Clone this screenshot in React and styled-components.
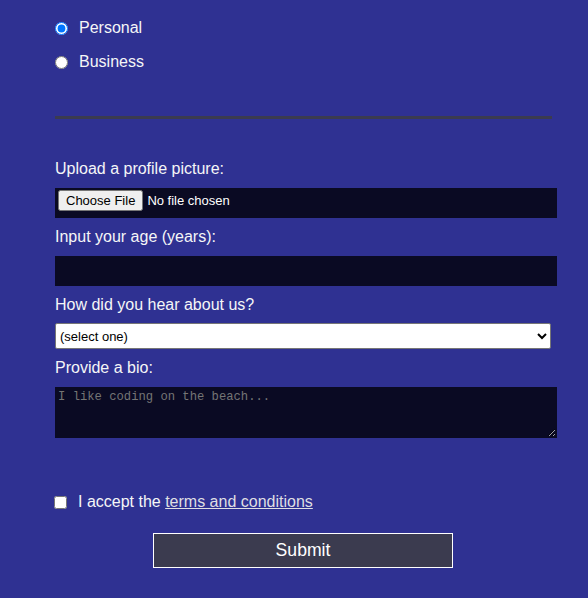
import React from "react";
import styled, { createGlobalStyle } from "styled-components";

const Global = createGlobalStyle`
  html, body { margin: 0; padding: 0; }
  body {
    background: #2f3192;
    color: #f5f6f7;
    font-family: "Liberation Sans", Arial, sans-serif;
    font-size: 16px;
  }
`;

const Form = styled.form`
  width: 502px;
  margin-left: 55px;
  display: flex;
  flex-direction: column;
`;

const RadioGroup = styled.div`
  display: flex;
  flex-direction: column;
  gap: 16px;
  padding-top: 19px;
  width: 497px;
  padding-bottom: 45px;
  border-bottom: 3px solid #3b3b4f;
`;

const RadioRow = styled.label`
  display: flex;
  align-items: center;
  height: 18px;
  gap: 11px;
  line-height: 18px;
`;

const Radio = styled.input`
  margin: 0;
  width: 13px;
  height: 13px;
`;

const Fields = styled.div`
  display: flex;
  flex-direction: column;
  padding-top: 41px;
`;

const Label = styled.label`
  display: block;
  line-height: 18px;
  margin: ${(p) => (p.$first ? "0" : "10px")} 0 ${(p) => (p.$tight ? "9px" : "10px")} 0;
`;

const DarkInput = styled.input`
  box-sizing: border-box;
  width: 502px;
  height: 30px;
  margin: 0;
  background: #0a0a23;
  border: 1px solid #0a0a23;
  color: #ffffff;
  font-family: "Liberation Sans", Arial, sans-serif;
  font-size: 13px;
  padding: 1px 2px;
`;

const Select = styled.select`
  box-sizing: border-box;
  width: 496px;
  height: 26px;
  margin: 0;
  background: #ffffff;
  color: #000;
  border: 1px solid #767676;
  border-radius: 2px;
  font-family: "Liberation Sans", Arial, sans-serif;
  font-size: 13px;
`;

const TextArea = styled.textarea`
  box-sizing: border-box;
  width: 502px;
  height: 51px;
  margin: 0;
  background: #0a0a23;
  border: 1px solid #0a0a23;
  color: #ffffff;
  font-family: "Liberation Mono", "DejaVu Sans Mono", monospace;
  font-size: 12.2px;
  padding: 2px 2px;
  &::placeholder { color: #757575; }
`;

const TermsRow = styled.label`
  display: flex;
  align-items: center;
  gap: 11px;
  margin-top: 54px;
  height: 20px;
  font-size: 16px;
  margin-left: -1px;
`;

const Check = styled.input`
  margin: 0;
  width: 13px;
  height: 13px;
`;

const Link = styled.a`
  color: #dfdfe2;
  text-decoration: underline;
`;

const Submit = styled.button`
  box-sizing: border-box;
  align-self: center;
  margin: 21px 0 0 -6px;
  width: 300px;
  height: 35px;
  background: #3b3b4f;
  border: 1px solid #ffffff;
  color: #ffffff;
  font-family: "Liberation Sans", Arial, sans-serif;
  font-size: 17.6px;
  padding: 0;
`;

export default function App() {
  return (
    <>
      <Global />
      <Form onSubmit={(e) => e.preventDefault()}>
        <RadioGroup>
          <RadioRow>
            <Radio type="radio" name="acct" defaultChecked />
            Personal
          </RadioRow>
          <RadioRow>
            <Radio type="radio" name="acct" />
            Business
          </RadioRow>
        </RadioGroup>
        <Fields>
          <Label $first>Upload a profile picture:</Label>
          <DarkInput type="file" />
          <Label>Input your age (years):</Label>
          <DarkInput type="number" />
          <Label $tight>How did you hear about us?</Label>
          <Select defaultValue="">
            <option value="">(select one)</option>
            <option>freeCodeCamp News</option>
            <option>freeCodeCamp YouTube Channel</option>
            <option>freeCodeCamp Forum</option>
            <option>Other</option>
          </Select>
          <Label>Provide a bio:</Label>
          <TextArea placeholder="I like coding on the beach..." />
        </Fields>
        <TermsRow>
          <Check type="checkbox" />
          <span>
            I accept the <Link href="#">terms and conditions</Link>
          </span>
        </TermsRow>
        <Submit type="submit">Submit</Submit>
      </Form>
    </>
  );
}
